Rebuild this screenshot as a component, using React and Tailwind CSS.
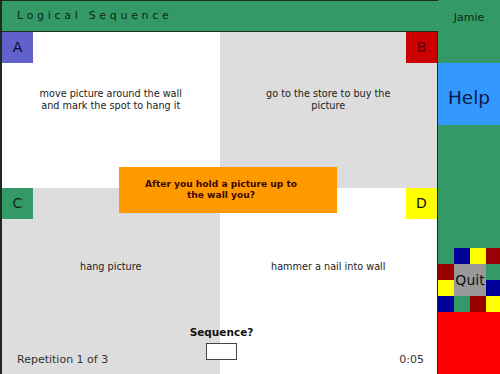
import React from "react";

const font = { fontFamily: '"DejaVu Sans", Verdana, sans-serif' };

const Quadrant = ({ letter, letterClass, side, bg, text, textPad }) => (
  <div className={`relative ${bg}`}>
    <div
      className={`absolute top-0 ${side === "left" ? "left-0" : "right-0"} w-[31px] h-[31px] flex items-center justify-center text-[14px] ${letterClass}`}
    >
      {letter}
    </div>
    <div className={`${textPad} px-6 text-center text-[9.7px] leading-[12px] text-[#222]`}>
      {text}
    </div>
  </div>
);

const mosaic = [
  "bg-[#339966]", "bg-[#000099]", "bg-[#ffff00]", "bg-[#990000]",
  "bg-[#990000]", null, null, "bg-[#339966]",
  "bg-[#ffff00]", null, null, "bg-[#000099]",
  "bg-[#000099]", "bg-[#339966]", "bg-[#990000]", "bg-[#ffff00]",
];

export default function App() {
  return (
    <div className="flex w-[500px] h-[374px] border-l-2 border-[#1c2a22] overflow-hidden" style={font}>
      <div className="flex flex-col w-[436px]">
        {/* title bar */}
        <div className="h-[32px] shrink-0 bg-[#339966] border-t border-b border-[#1c2a22] flex items-center pl-[15px] text-[11px] tracking-[3.7px] text-[#0d2a17]">
          Logical Sequence
        </div>

        {/* answer board */}
        <div className="relative flex-1 grid grid-cols-2 grid-rows-[156px_1fr] border-r border-[#1c2a22]">
          <Quadrant
            letter="A"
            side="left"
            letterClass="bg-[#6161cc] text-[#0a0a3a]"
            bg="bg-white"
            textPad="pt-[56px]"
            text={<>move picture around the wall<br />and mark the spot to hang it</>}
          />
          <Quadrant
            letter="B"
            side="right"
            letterClass="bg-[#cc0000] text-[#550000]"
            bg="bg-[#dddddd]"
            textPad="pt-[56px]"
            text={<>go to the store to buy the<br />picture</>}
          />
          <Quadrant
            letter="C"
            side="left"
            letterClass="bg-[#339966] text-[#0d2a17]"
            bg="bg-[#dddddd]"
            textPad="pt-[73px]"
            text="hang picture"
          />
          <Quadrant
            letter="D"
            side="right"
            letterClass="bg-[#ffff00] text-[#111]"
            bg="bg-white"
            textPad="pt-[73px]"
            text="hammer a nail into wall"
          />

          {/* question */}
          <div className="absolute left-[117px] top-[135px] w-[218px] h-[46px] bg-[#ff9900] flex items-center justify-center pr-[14px] text-center text-[9.1px] leading-[11px] font-bold text-[#3a0a00]">
            After you hold a picture up to<br />the wall you?
          </div>

          {/* footer */}
          <div className="absolute left-0 right-0 bottom-0 h-[52px] text-[11px] text-[#333]">
            <div className="absolute left-[15px] bottom-[6px]">Repetition 1 of 3</div>
            <div className="absolute left-0 right-0 top-[3px] flex flex-col items-center pl-[4px]">
              <div className="font-bold text-[#111] text-[10.5px] leading-[14px]">Sequence?</div>
              <div className="mt-[4px] w-[31px] h-[17px] bg-white border border-[#444]"></div>
            </div>
            <div className="absolute right-[13px] bottom-[6px]">0:05</div>
          </div>
        </div>
      </div>

      {/* side bar */}
      <div className="flex flex-col w-[62px]">
        <div className="h-[63px] bg-[#339966] flex justify-center pt-[10px] text-[11px] text-[#0d2a17]">
          Jamie
        </div>
        <div className="h-[62px] bg-[#3399ff] flex items-center justify-center pt-[7px] text-[18.5px] text-[#0a1a4a]">
          Help
        </div>
        <div className="h-[123px] bg-[#339966]"></div>
        <div className="relative grid grid-cols-[16px_16px_16px_14px] grid-rows-[16px_16px_16px_16px]">
          {mosaic.map((c, i) => (
            <div key={i} className={c || ""}></div>
          ))}
          <div className="absolute left-[16px] top-[16px] w-[32px] h-[32px] bg-[#999999] flex items-center justify-center text-[14px] text-[#111]">
            Quit
          </div>
        </div>
        <div className="flex-1 bg-[#ff0000]"></div>
      </div>
    </div>
  );
}
